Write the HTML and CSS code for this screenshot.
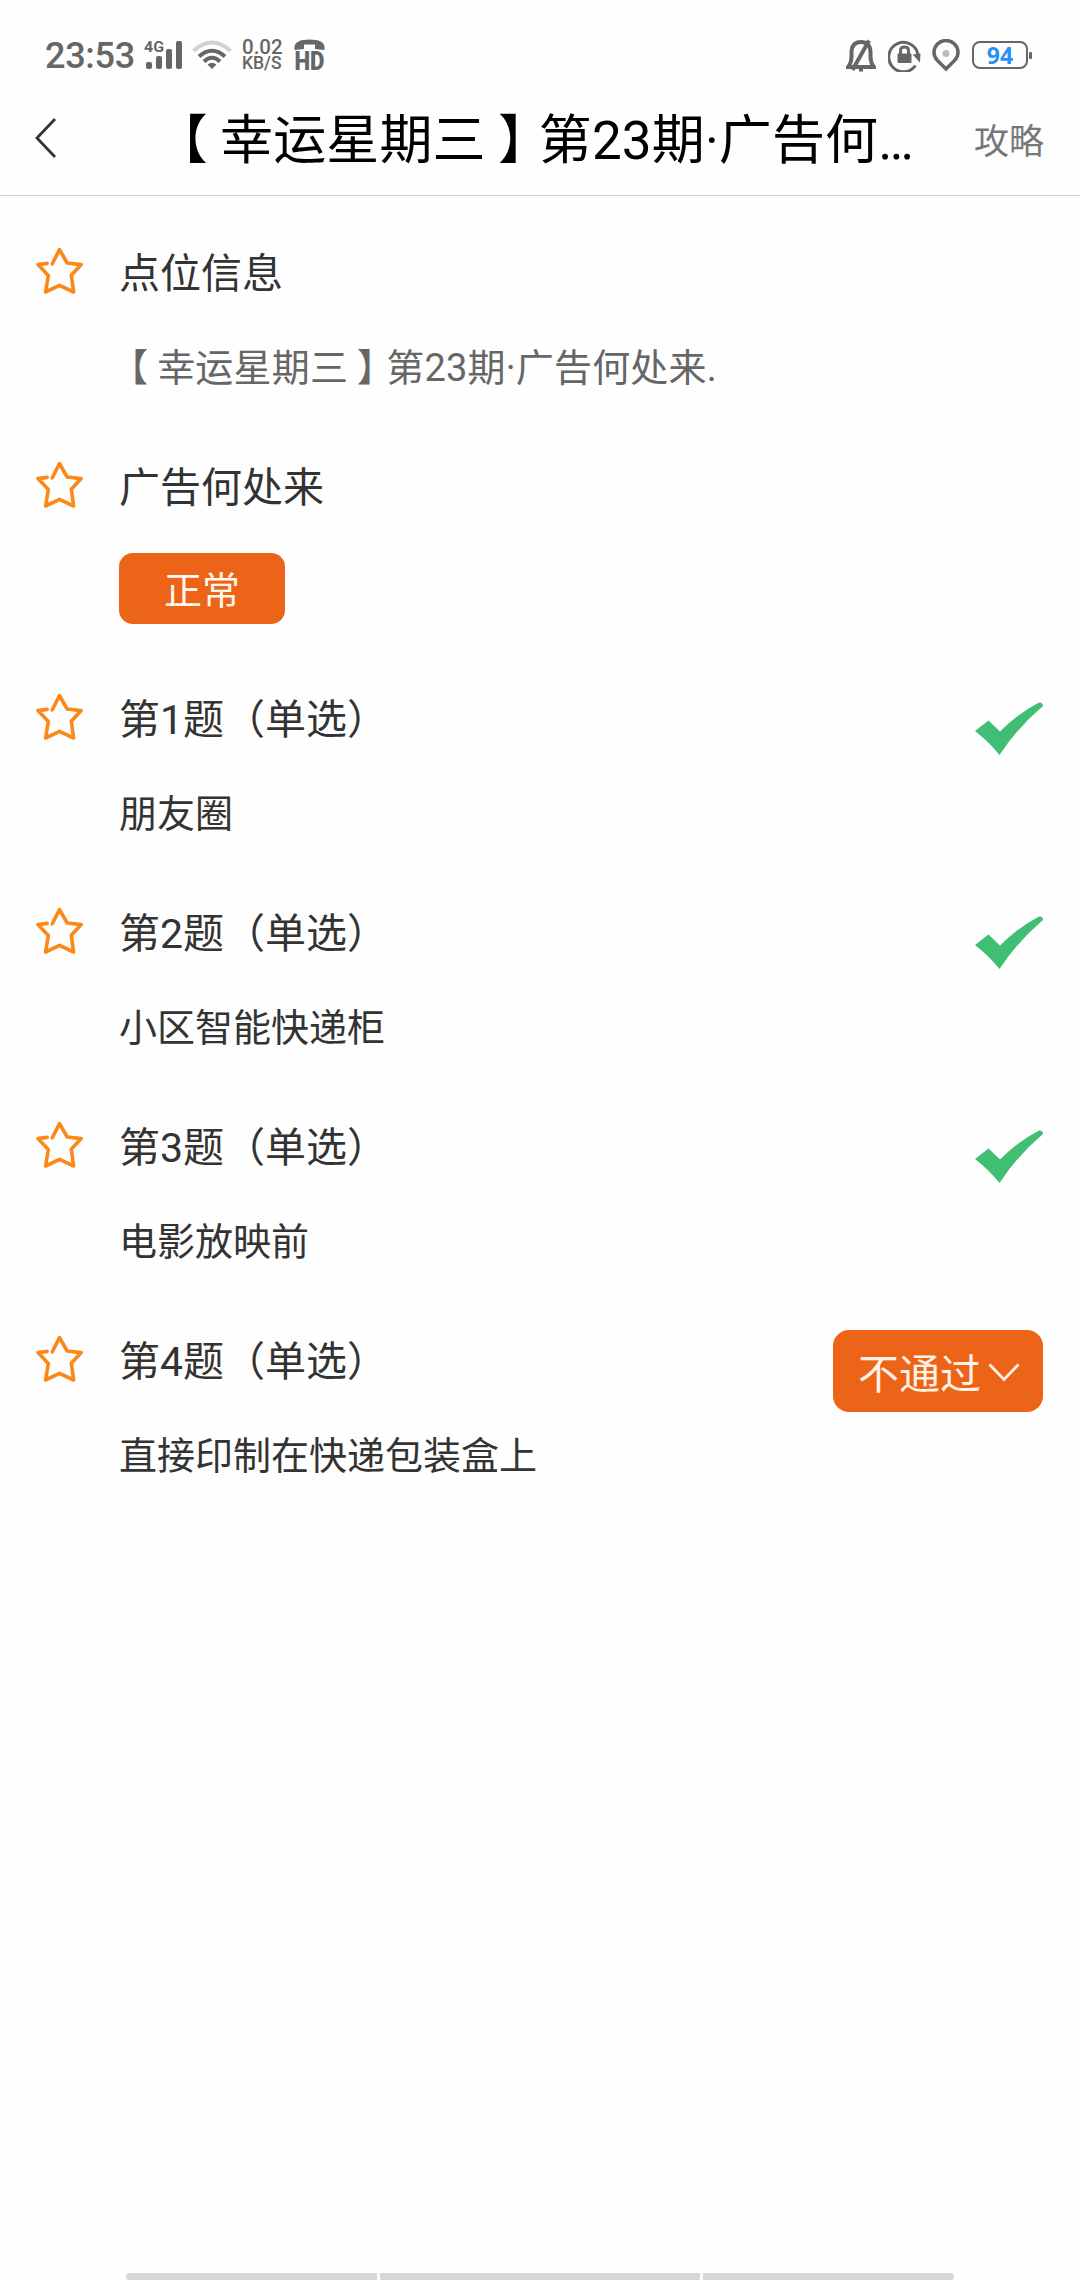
FILE: index.html
```html
<!DOCTYPE html>
<html lang="zh-CN">
<head>
  <meta charset="UTF-8" />
  <meta name="viewport" content="width=device-width, initial-scale=1.0"/>
  <title>广告何处来</title>
  <link rel="stylesheet" href="styles.css">
</head>
<body>
  <!-- shared icons -->
  <svg class="icon-defs" width="0" height="0">
    <symbol id="star" viewBox="0 0 47 47">
      <path d="M16.3 16.8L23.5 2.6L31.2 16L45.2 17.6L35.3 28.2L37.6 45L23.5 38.4L9.6 45L12.3 28.6L2 17.6L11.2 16.4" fill="none" stroke="#fa8919" stroke-width="3.6" stroke-linecap="round" stroke-linejoin="round"/>
    </symbol>
    <symbol id="check" viewBox="0 0 68 53">
      <path d="M0 29L13.500 18.500L25 29.500Q42 12 64 0.500Q68 0 68 4Q43 25 24.500 53Q14 40 0 29Z" fill="#3fbe74"/>
    </symbol>
  </svg>

  <div class="status-bar">
    <span class="clock">23:53</span>
    <svg class="signal" width="38" height="32" viewBox="0 0 38 32">
      <text x="0" y="13" class="net" textLength="20" lengthAdjust="spacingAndGlyphs">4G</text>
      <rect x="2" y="23" width="6" height="7" rx="2"/>
      <rect x="12" y="17" width="6" height="13" rx="2"/>
      <rect x="22" y="10" width="6" height="20" rx="2"/>
      <rect x="32" y="2" width="6" height="28" rx="2"/>
    </svg>
    <svg class="wifi" width="40" height="32" viewBox="0 0 40 32">
      <path d="M1.500 12Q20 -5 38.500 12" stroke="#d2d2d2"/>
      <path d="M7 17.500Q20 6 33 17.500"/>
      <path d="M12 22.500Q20 15 28 22.500"/>
      <path class="dot" d="M15.500 25.500Q20 22 24.500 25.500L20 30Z"/>
    </svg>
    <div class="speed"><span class="rate">0.02</span><span class="unit">KB/S</span></div>
    <svg class="hd" width="31" height="32" viewBox="0 0 31 32">
      <path d="M0.500 11V8Q1 0.500 15.500 0.500Q30 0.500 30.500 8V11L21 10V5.500H10V10Z"/>
      <text x="0.500" y="31" textLength="30" lengthAdjust="spacingAndGlyphs">HD</text>
    </svg>

    <div class="status-right">
      <svg class="bell" width="30" height="33" viewBox="0 0 30 33">
        <path d="M2 28Q5.500 24 5.500 17V13Q6 3 15 3Q24 3 24.500 13V17Q24.500 24 28 28Z"/>
        <path d="M6.500 31L23 1.500M13 30.500H17"/>
      </svg>
      <svg class="lock" width="33" height="33" viewBox="0 0 33 33">
        <path d="M27.500 26.500A14.700 14.700 0 1 1 30 16"/>
        <path class="fill" d="M24.500 15.500L32.500 14.500L32 23.500Z"/>
        <rect class="fill" x="9.500" y="14.500" width="14" height="9.500" rx="1"/>
        <path d="M12.500 15V11.500Q12.500 8 16.500 8T20.500 11.500V15"/>
      </svg>
      <svg class="pin" width="28" height="33" viewBox="0 0 28 33">
        <path d="M14 30L5.500 21.500Q2 18 2 13.500A12 12 0 0 1 26 13.500Q26 18 22.500 21.500Z"/>
        <circle cx="14" cy="14.500" r="3.500"/>
      </svg>
      <div class="battery">94</div>
    </div>
  </div>

  <div class="header">
    <svg class="back" width="22" height="42" viewBox="0 0 22 42">
      <path d="M20 2L2 21L20 40"/>
    </svg>
    <h1><span class="bracket-open">【</span>幸运星期三<span class="bracket-close">】</span>第23期·广告何…</h1>
    <span class="guide">攻略</span>
  </div>

  <div class="list">
    <div class="item">
      <svg class="star"><use href="#star"/></svg>
      <div class="content">
        <h2>点位信息</h2>
        <p class="gray"><span class="bracket-open">【</span>幸运星期三<span class="bracket-close">】</span>第23期·广告何处来.</p>
      </div>
    </div>

    <div class="item">
      <svg class="star"><use href="#star"/></svg>
      <div class="content">
        <h2>广告何处来</h2>
        <span class="tag">正常</span>
      </div>
    </div>

    <div class="item">
      <svg class="star"><use href="#star"/></svg>
      <div class="content">
        <h2>第1题（单选）</h2>
        <p>朋友圈</p>
      </div>
      <svg class="check"><use href="#check"/></svg>
    </div>

    <div class="item">
      <svg class="star"><use href="#star"/></svg>
      <div class="content">
        <h2>第2题（单选）</h2>
        <p>小区智能快递柜</p>
      </div>
      <svg class="check"><use href="#check"/></svg>
    </div>

    <div class="item">
      <svg class="star"><use href="#star"/></svg>
      <div class="content">
        <h2>第3题（单选）</h2>
        <p>电影放映前</p>
      </div>
      <svg class="check"><use href="#check"/></svg>
    </div>

    <div class="item">
      <svg class="star"><use href="#star"/></svg>
      <div class="content">
        <h2>第4题（单选）</h2>
        <p>直接印制在快递包装盒上</p>
      </div>
      <button class="reject">不通过
        <svg width="32" height="19" viewBox="0 0 32 19"><path d="M1.500 1.500L16 16.500L30.500 1.500"/></svg>
      </button>
    </div>
  </div>

  <div class="nav-bar">
    <span></span>
    <span class="middle"></span>
    <span></span>
  </div>
</body>
</html>
```
FILE: styles.css
```css
* {
  margin: 0;
  padding: 0;
  box-sizing: border-box;
}

body {
  display: flex;
  flex-direction: column;
  height: 2280px;
  background-color: #fefefe;
  color: #333;
  font-family: Roboto, 'Noto Sans CJK SC', sans-serif;
}

svg {
  display: block;
  flex: none;
}

.icon-defs {
  position: absolute;
}

/* status bar */
.status-bar {
  display: flex;
  align-items: center;
  height: 85px;
  padding: 25px 52px 0 45px;
  color: #666;
}

.clock {
  width: 98px;
  font-size: 36px;
  font-weight: 500;
  line-height: 60px;
  letter-spacing: -0.3px;
  padding-top: 2px;
}

.signal, .hd {
  fill: #666;
}

.signal {
  margin-left: 1px;
}

.signal .net {
  font-size: 15px;
  font-weight: bold;
}

.wifi {
  margin-left: 10px;
  fill: none;
  stroke: #666;
  stroke-width: 4;
}

.wifi .dot {
  fill: #666;
  stroke: none;
}

.speed {
  display: flex;
  flex-direction: column;
  width: 42px;
  margin-left: 10px;
  font-weight: 500;
}

.speed .rate {
  font-size: 20.5px;
  line-height: 16px;
}

.speed .unit {
  font-size: 17.5px;
  line-height: 16px;
}

.hd {
  margin-left: 10px;
  overflow: visible;
}

.hd text {
  font-size: 25px;
  font-weight: 900;
}

.status-right {
  display: flex;
  align-items: center;
  margin-left: auto;
}

.bell, .lock, .pin {
  fill: none;
  stroke: #666;
}

.bell {
  stroke-width: 4;
}

.lock {
  margin-left: 12px;
  stroke-width: 3;
}

.lock .fill {
  fill: #666;
  stroke: none;
}

.pin {
  margin-left: 11px;
  stroke-width: 3.500px;
}

.pin circle {
  fill: #bbb;
  stroke: none;
}

.battery {
  position: relative;
  width: 56px;
  height: 28px;
  margin-left: 12px;
  border: 2px solid #666;
  border-radius: 8px;
  color: #2b90f5;
  font-family: 'Noto Sans', sans-serif;
  font-size: 23px;
  font-weight: bold;
  line-height: 25px;
  text-align: center;
}

.battery::after {
  content: "";
  position: absolute;
  top: 9px;
  right: -6px;
  width: 3px;
  height: 7px;
  border-radius: 1px;
  background-color: #666;
}

/* page header */
.header {
  display: flex;
  align-items: center;
  height: 111px;
  padding: 0 36px 4px 35px;
  border-bottom: 1px solid #ccc;
}

.back path {
  fill: none;
  stroke: #333;
  stroke-width: 2.800px;
}

.header h1 {
  flex: 1;
  padding-top: 6px;
  margin-left: 110px;
  color: #000;
  font-size: 53px;
  font-weight: normal;
  line-height: 80px;
  letter-spacing: 0.12px;
  white-space: nowrap;
}

/* half-width brackets, centred in a full-width cell */
.bracket-open, .bracket-close {
  font-feature-settings: "halt";
}

.bracket-open {
  margin-left: 0.270em;
  margin-right: 0.230em;
}

.bracket-close {
  margin-left: 0.230em;
  margin-right: 0.270em;
}

.guide {
  color: #777;
  font-size: 35px;
}

/* question list */
.list {
  padding: 29px 37px 0 36px;
}

.item {
  display: flex;
  align-items: flex-start;
}

.star {
  width: 47px;
  height: 47px;
  margin-top: 22px;
}

.content {
  flex: 1;
  padding-top: 19px;
  margin-left: 36px;
}

.content h2 {
  font-size: 41px;
  font-weight: normal;
  line-height: 60px;
}

.content p {
  margin-top: 38px;
  padding-bottom: 44px;
  font-size: 38px;
  line-height: 53px;
}

.content .gray {
  color: #666;
  letter-spacing: 0.18px;
}

.tag {
  display: block;
  width: 166px;
  height: 71px;
  margin: 35px 0 47px;
  border-radius: 14px;
  background-color: #eb6417;
  color: #fff6ec;
  font-size: 38px;
  line-height: 76px;
  text-align: center;
}

.check {
  width: 68px;
  height: 53px;
  margin-top: 31px;
}

.reject {
  display: flex;
  align-items: center;
  width: 210px;
  height: 82px;
  margin-top: 17px;
  padding-left: 25px;
  border: none;
  border-radius: 16px;
  background-color: #eb6417;
  color: #fff1e6;
  font: 41px Roboto, 'Noto Sans CJK SC', sans-serif;
}

.reject svg {
  margin: 3px 0 0 7px;
  fill: none;
  stroke: #fff1e6;
  stroke-width: 2.800px;
}

/* gesture bar at the bottom edge */
.nav-bar {
  display: flex;
  justify-content: center;
  gap: 3px;
  margin-top: auto;
}

.nav-bar span {
  width: 251px;
  height: 7px;
  background-color: #d8d8d8;
}

.nav-bar .middle {
  width: 320px;
}

.nav-bar span:first-child {
  border-radius: 4px 0 0 4px;
}

.nav-bar span:last-child {
  border-radius: 0 4px 4px 0;
}
```
